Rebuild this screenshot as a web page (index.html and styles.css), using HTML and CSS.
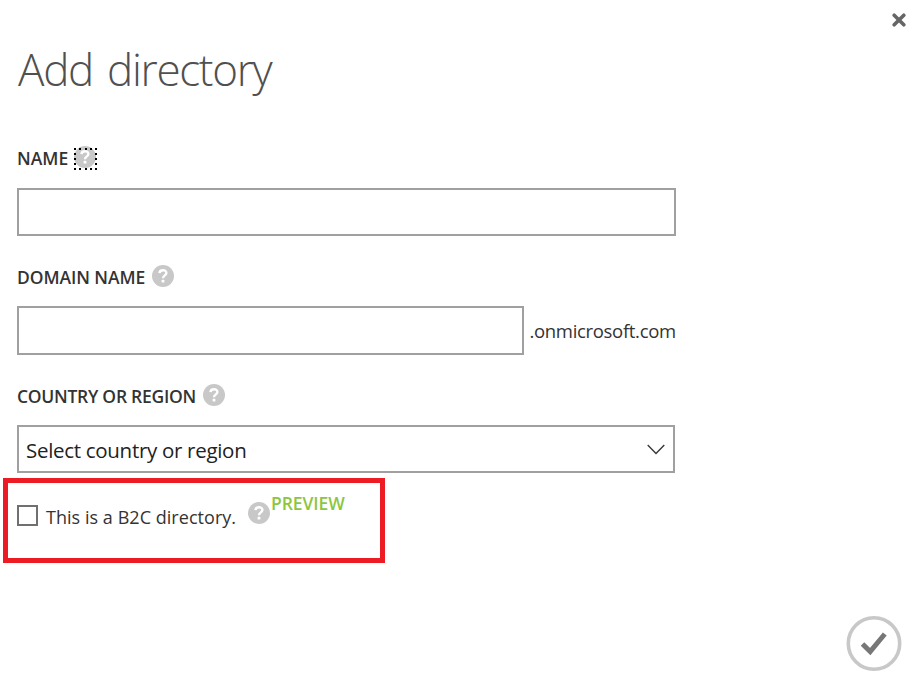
FILE: index.html
```html
<!DOCTYPE html>
<html lang="en">
<head>
<meta charset="utf-8">
<title>Add directory</title>
<link rel="stylesheet" href="styles.css">
</head>
<body>
<svg class="defs" aria-hidden="true">
  <symbol id="help" viewBox="0 0 22 22">
    <circle cx="11" cy="11" r="11" fill="#c8c8c8"/>
    <path d="M7.5 8.1C7.6 4.2 14.5 4.2 14.4 8.1C14.4 10.4 11 10.4 11 13.2" fill="none" stroke="#fff" stroke-width="2.4"/>
    <rect x="9.6" y="14.8" width="2.8" height="2.8" rx=".6" fill="#fff"/>
  </symbol>
</svg>
<main class="dialog">
  <button class="close" aria-label="Close">
    <svg width="14" height="14" viewBox="0 0 14 14"><path d="M2.2 2.2L11.8 11.8M11.8 2.2L2.2 11.8" stroke="#666" stroke-width="3.6" stroke-linecap="round"/></svg>
  </button>
  <h1 class="title"><span>Add directory</span></h1>
  <section class="field">
    <div class="label"><span class="t-name">NAME</span><span class="help focused"><svg><use href="#help"/></svg></span></div>
    <div class="input"></div>
  </section>
  <section class="field">
    <div class="label"><span class="t-domain">DOMAIN NAME</span><span class="help"><svg><use href="#help"/></svg></span></div>
    <div class="domain-row"><div class="input short"></div><span class="suffix">.onmicrosoft.com</span></div>
  </section>
  <section class="field country">
    <div class="label"><span class="t-country">COUNTRY OR REGION</span><span class="help"><svg><use href="#help"/></svg></span></div>
    <div class="input select"><span class="t-select">Select country or region</span>
      <svg class="chevron" width="18" height="11" viewBox="0 0 18 11"><path d="M.7 1L9 9.5L17.3 1" fill="none" stroke="#333" stroke-width="1.3"/></svg>
    </div>
  </section>
  <section class="highlight">
    <span class="checkbox"></span>
    <span class="t-check">This is a B2C directory.</span>
    <span class="help"><svg><use href="#help"/></svg></span>
    <span class="preview">PREVIEW</span>
  </section>
  <button class="submit" aria-label="Submit">
    <svg width="56" height="56" viewBox="0 0 56 56"><circle cx="28" cy="28.5" r="25.7" fill="#fff" stroke="#c8c8c8" stroke-width="3.6"/><path d="M16.5 29L24.2 36.5L38.8 19" fill="none" stroke="#777" stroke-width="5"/></svg>
  </button>
</main>
</body>
</html>
```
FILE: styles.css
```css
* { box-sizing: border-box; }
body {
  margin: 0;
  background: #fff;
  color: #333;
  font-family: "Open Sans", "Noto Sans", sans-serif;
}
svg { display: block; }
.defs { position: absolute; width: 0; height: 0; }
button { display: block; padding: 0; border: 0; background: none; }
.dialog {
  display: flex;
  flex-direction: column;
  height: 683px;
  padding: 13px 0 0 17px;
  overflow: hidden;
}
.close { align-self: flex-end; margin-right: 10px; }
.title {
  height: 60px;
  margin: 12px 0 47px 1px;
  font-size: 44px;
  font-weight: 300;
  line-height: 60px;
  letter-spacing: -1.3px;
  word-spacing: 4px;
  color: #505050;
  white-space: nowrap;
}
.field { height: 119px; flex: none; }
.label {
  display: flex;
  height: 42px;
  font-size: 17.5px;
  font-weight: 600;
  line-height: 24px;
  white-space: nowrap;
}
.t-domain { letter-spacing: -0.08px; }
.t-country { letter-spacing: -0.27px; }
.help { width: 22px; height: 22px; margin-left: 7px; }
.help svg { width: 22px; height: 22px; }
.focused { position: relative; margin-left: 6px; }
.focused::after {
  content: "";
  position: absolute;
  inset: 2px -1px -2px 0;
  background:
    repeating-linear-gradient(90deg, #000 0 2px, transparent 2px 5.25px) 0 0 / 100% 2px no-repeat,
    repeating-linear-gradient(90deg, #000 0 2px, transparent 2px 5.25px) 0 100% / 100% 2px no-repeat,
    repeating-linear-gradient(#000 0 2px, transparent 2px 5px) 0 0 / 2px 100% no-repeat,
    repeating-linear-gradient(#000 0 2px, transparent 2px 5px) 100% 0 / 2px 100% no-repeat;
}
.input { width: 659px; height: 48px; border: 2px solid #a0a0a0; }
.domain-row { display: flex; margin-top: -1px; }
.short { width: 507px; height: 49px; }
.suffix { margin-left: 5.5px; font-size: 18.5px; line-height: 49px; letter-spacing: -0.32px; }
.country { height: 94px; }
.country .label { height: 41px; }
.select {
  display: flex;
  align-items: center;
  justify-content: space-between;
  width: 658px;
  padding: 0 8px 0 7px;
  font-size: 20.5px;
  color: #222;
}
.t-select { padding-top: 2px; letter-spacing: -0.3px; }
.highlight {
  display: flex;
  flex: none;
  width: 382px;
  height: 85px;
  margin-left: -14px;
  padding-left: 9px;
  border: 5px solid #ed1c24;
  white-space: nowrap;
}
.checkbox { width: 21px; height: 21px; margin-top: 22px; border: 2px solid #707070; }
.t-check { margin: 22px 0 0 8px; font-size: 18px; line-height: 24px; letter-spacing: 0.04px; }
.highlight .help { margin: 19px 0 0 12px; }
.preview { margin: 8px 0 0 1px; font-size: 17.5px; font-weight: 600; line-height: 24px; letter-spacing: -0.1px; color: #8cc63f; }
.submit { align-self: flex-end; margin: 52px 14px 0 0; }
```
